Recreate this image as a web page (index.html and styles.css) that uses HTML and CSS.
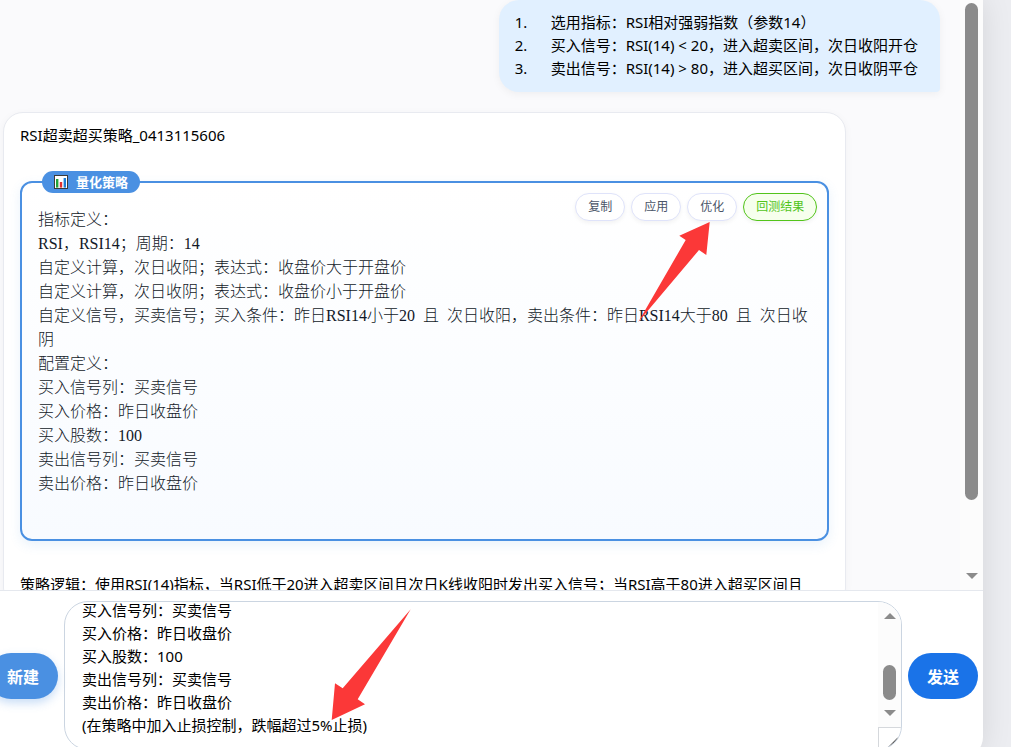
FILE: index.html
```html
<!DOCTYPE html>
<html lang="zh-CN">
<head>
<meta charset="utf-8">
<title>量化策略</title>
<link rel="stylesheet" href="styles.css">
</head>
<body>
<div class="app">
  <main class="chat">
    <div class="messages">
      <ol class="bubble">
        <li><span class="num">1.</span><span>选用指标：RSI相对强弱指数（参数14）</span></li>
        <li><span class="num">2.</span><span>买入信号：RSI(14) &lt; 20，进入超卖区间，次日收阳开仓</span></li>
        <li><span class="num">3.</span><span>卖出信号：RSI(14) &gt; 80，进入超买区间，次日收阴平仓</span></li>
      </ol>
      <article class="card">
        <p class="title">RSI超卖超买策略_0413115606</p>
        <section class="strategy">
          <div class="badge">
            <svg width="14" height="14" viewBox="0 0 14 14" aria-hidden="true">
              <rect x="0.5" y="0.5" width="13" height="13" fill="#fff" stroke="#3b3b3b"/>
              <rect x="2" y="4" width="2.4" height="8.6" fill="#23a33a"/>
              <rect x="5.8" y="7" width="2.4" height="5.6" fill="#e03131"/>
              <rect x="9.6" y="3" width="2.4" height="9.6" fill="#1c7ed6"/>
            </svg>
            <span>量化策略</span>
          </div>
          <div class="actions">
            <button type="button" class="chip">复制</button>
            <button type="button" class="chip">应用</button>
            <button type="button" class="chip">优化</button>
            <button type="button" class="chip chip-green">回测结果</button>
          </div>
          <div class="code">
            <div>指标定义：</div>
            <div>RSI，RSI14；周期：14</div>
            <div>自定义计算，次日收阳；表达式：收盘价大于开盘价</div>
            <div>自定义计算，次日收阴；表达式：收盘价小于开盘价</div>
            <div>自定义信号，买卖信号；买入条件：昨日RSI14小于20&ensp;且&ensp;次日收阳，卖出条件：昨日RSI14大于80&ensp;且&ensp;次日收阴</div>
            <div>配置定义：</div>
            <div>买入信号列：买卖信号</div>
            <div>买入价格：昨日收盘价</div>
            <div>买入股数：100</div>
            <div>卖出信号列：买卖信号</div>
            <div>卖出价格：昨日收盘价</div>
          </div>
        </section>
        <p class="logic">策略逻辑：使用RSI(14)指标，当RSI低于20进入超卖区间且次日K线收阳时发出买入信号；当RSI高于80进入超买区间且</p>
      </article>
    </div>
    <div class="scrollbar" aria-hidden="true">
      <div class="thumb thumb-chat"></div>
      <div class="arrow-down"></div>
    </div>
  </main>
  <form class="composer">
    <button type="button" class="btn btn-new">新建</button>
    <div class="input-box">
      <textarea class="input" aria-label="消息" spellcheck="false">买入信号列：买卖信号
买入价格：昨日收盘价
买入股数：100
卖出信号列：买卖信号
卖出价格：昨日收盘价
(在策略中加入止损控制，跌幅超过5%止损)</textarea>
      <div class="input-side" aria-hidden="true">
        <div class="scrollbar input-scroll">
          <div class="arrow-up"></div>
          <div class="thumb thumb-input"></div>
          <div class="arrow-down"></div>
        </div>
        <div class="resizer">
          <svg width="12" height="12" viewBox="0 0 12 12"><path d="M0 12L10 2M5 12L10 7" stroke="#555" stroke-width="1.3" fill="none"/></svg>
        </div>
      </div>
    </div>
    <button type="submit" class="btn btn-send">发送</button>
  </form>
</div>
<svg class="pointer pointer-top" width="72" height="101" viewBox="638 222 72 101" aria-hidden="true"><path d="M709.7 222L679.3 235.7L685.7 240L638.3 322L699 250L706.3 255Z"/></svg>
<svg class="pointer pointer-bottom" width="80" height="112" viewBox="331 609 80 112" aria-hidden="true"><path d="M331.7 720L335 683.3L342.7 688.3L410.7 609.3L357.7 699.3L365 704.3Z"/></svg>
</body>
</html>
```

FILE: styles.css
```css
* { box-sizing: border-box; }

body {
  margin: 0;
  height: 100vh;
  overflow: hidden;
  position: relative;
  background: #ecedf1;
  color: #000;
  font: 15px/23px "Noto Sans", "Noto Sans CJK SC", sans-serif;
}

p, ol { margin: 0; padding: 0; list-style: none; }
button, textarea { font-family: inherit; }

.app {
  display: flex;
  flex-direction: column;
  height: calc(100vh + 10px);
  margin: 0 28px 0 -17px;
  background: #fff;
  border-radius: 0 0 20px 0;
  box-shadow: 0 0 30px rgba(0, 0, 0, 0.1);
  overflow: hidden;
}

.chat {
  flex: 1;
  min-height: 0;
  display: flex;
  background: #fafafc;
  overflow: hidden;
}

.messages {
  flex: 1;
  min-width: 0;
  display: flex;
  flex-direction: column;
  gap: 20px;
  padding: 0 20px;
}

.bubble {
  align-self: flex-end;
  padding: 11px 22px 12px 16px;
  background: #e1f0ff;
  border-radius: 20px 20px 4px 20px;
  box-shadow: 0 2px 8px rgba(0, 0, 0, 0.05);
}
.bubble li { display: flex; }
.num { width: 36px; }

.card {
  width: 90%;
  padding: 11px 16px;
  background: #fff;
  border: 1px solid #e8eaf0;
  border-radius: 20px;
  box-shadow: 0 2px 8px rgba(0, 0, 0, 0.04);
}

.strategy {
  position: relative;
  margin: 34px 0 32px;
  padding: 25px 16px 43px;
  border: 2px solid #4a90e2;
  border-radius: 12px;
  background: linear-gradient(#fff, #f8fbff);
  box-shadow: 0 4px 12px rgba(74, 144, 226, 0.12);
}

.badge {
  position: absolute;
  top: -12px;
  left: 20px;
  display: flex;
  align-items: center;
  gap: 8px;
  height: 22px;
  padding: 0 12px;
  border-radius: 11px;
  background: #4a90e2;
  color: #fff;
  font-size: 13px;
  line-height: 20px;
  font-weight: 700;
}

.actions {
  position: absolute;
  top: 10px;
  right: 10px;
  display: flex;
  gap: 6px;
}
.chip {
  height: 28px;
  padding: 0 12px;
  border: 1px solid #dfe3fa;
  border-radius: 14px;
  background: #fff;
  color: #4a5568;
  font-size: 12px;
  line-height: 18px;
  box-shadow: 0 2px 4px rgba(0, 0, 0, 0.05);
}
.chip-green {
  border-color: #52c41a;
  background: #f6ffed;
  color: #52c41a;
}

.code {
  color: #111827;
  font: 300 16px/24px "Liberation Serif", "Noto Sans CJK SC", serif;
}

.scrollbar {
  flex: none;
  display: flex;
  flex-direction: column;
  align-items: center;
  width: 23px;
  background: #fcfcfc;
}
.thumb { width: 13px; border-radius: 7px; background: #8b8b8b; }
.thumb-chat { height: 497px; margin: 3px 0 auto; }
.thumb-input { height: 35px; margin: auto 0 10px; }
.arrow-down, .arrow-up {
  border: 6px solid transparent;
  border-bottom-width: 0;
  border-top-color: #8b8b8b;
}
.arrow-up {
  border: 6px solid transparent;
  border-top-width: 0;
  border-bottom-color: #8b8b8b;
}
.chat .arrow-down { margin-bottom: 11px; }

.composer {
  flex: none;
  display: flex;
  align-items: center;
  gap: 6px;
  height: 167px;
  padding: 10px 5px 7px;
  border-top: 1px solid #e5e8ee;
}

.btn {
  width: 70px;
  height: 46px;
  padding: 0;
  border: 0;
  border-radius: 23px;
  color: #fff;
  font-size: 16px;
  font-weight: 700;
}
.btn-new { background: #4a90e2; box-shadow: 0 4px 10px rgba(74, 144, 226, 0.3); }
.btn-send { background: #1a73e8; }

.input-box {
  flex: 1;
  align-self: stretch;
  display: flex;
  border: 1px solid #cbd5e1;
  border-radius: 24px;
  overflow: hidden;
}
.input {
  flex: 1;
  min-width: 0;
  margin-top: -3px;
  padding: 0 17px;
  border: 0;
  outline: 0;
  resize: none;
  overflow: hidden;
  background: transparent;
  color: #000;
  font-size: 15px;
  line-height: 23px;
}
.input-side { display: flex; flex-direction: column; width: 23px; }
.input-scroll { height: 125px; padding: 11px 0; }
.resizer {
  flex: 1;
  padding: 8px 0 0 9px;
  border: 1px solid #d5d8dc;
  border-width: 1px 0 0 1px;
}
.resizer svg { display: block; }

.pointer { position: absolute; fill: #fb3838; }
.pointer-top { left: 638px; top: 222px; }
.pointer-bottom { left: 331px; top: 609px; }
```
